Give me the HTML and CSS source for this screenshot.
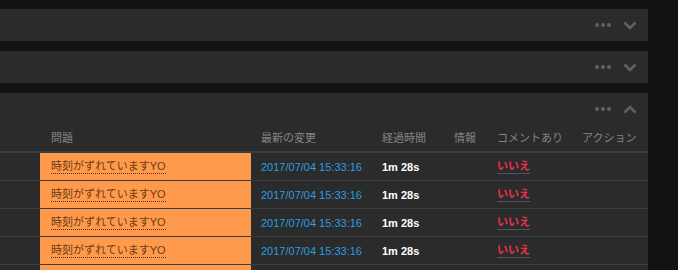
FILE: index.html
```html
<!DOCTYPE html>
<html>
  <head>
    <meta charset="utf-8">
    <title>Alerts</title>
    <link rel="stylesheet" href="styles.css">
  </head>
  <body>
    <div class="board">
      <section class="panel">
        <div class="panel-head">
          <span class="dots"><i></i><i></i><i></i></span>
          <svg class="chevron" width="14" height="9" viewBox="0 0 14 9"><path d="M1.5 1.5 L7 7 L12.5 1.5"/></svg>
        </div>
      </section>
      <section class="panel">
        <div class="panel-head">
          <span class="dots"><i></i><i></i><i></i></span>
          <svg class="chevron" width="14" height="9" viewBox="0 0 14 9"><path d="M1.5 1.5 L7 7 L12.5 1.5"/></svg>
        </div>
      </section>
      <section class="panel">
        <div class="panel-head">
          <span class="dots"><i></i><i></i><i></i></span>
          <svg class="chevron" width="14" height="9" viewBox="0 0 14 9"><path d="M1.5 7.5 L7 2 L12.5 7.5"/></svg>
        </div>
        <div class="table">
          <div class="row head">
            <span></span>
            <span class="issue-h">問題</span>
            <span>最新の変更</span>
            <span>経過時間</span>
            <span>情報</span>
            <span>コメントあり</span>
            <span>アクション</span>
          </div>
          <div class="row">
            <span></span>
            <span class="issue"><a href="#">時刻がずれていますYO</a></span>
            <span class="date">2017/07/04 15:33:16</span>
            <span class="elapsed">1m 28s</span>
            <span></span>
            <span><a href="#" class="no">いいえ</a></span>
            <span></span>
          </div>
          <div class="row">
            <span></span>
            <span class="issue"><a href="#">時刻がずれていますYO</a></span>
            <span class="date">2017/07/04 15:33:16</span>
            <span class="elapsed">1m 28s</span>
            <span></span>
            <span><a href="#" class="no">いいえ</a></span>
            <span></span>
          </div>
          <div class="row">
            <span></span>
            <span class="issue"><a href="#">時刻がずれていますYO</a></span>
            <span class="date">2017/07/04 15:33:16</span>
            <span class="elapsed">1m 28s</span>
            <span></span>
            <span><a href="#" class="no">いいえ</a></span>
            <span></span>
          </div>
          <div class="row">
            <span></span>
            <span class="issue"><a href="#">時刻がずれていますYO</a></span>
            <span class="date">2017/07/04 15:33:16</span>
            <span class="elapsed">1m 28s</span>
            <span></span>
            <span><a href="#" class="no">いいえ</a></span>
            <span></span>
          </div>
          <div class="row">
            <span></span>
            <span class="issue"></span>
            <span></span>
            <span></span>
            <span></span>
            <span></span>
            <span></span>
          </div>
        </div>
      </section>
    </div>
  </body>
</html>
```

FILE: styles.css
```css
body, html {
    margin: 0;
    padding: 0;
    height: 270px;
    overflow: hidden;
    background: #111214;
    font-family: 'Liberation Sans', 'Noto Sans CJK JP', sans-serif;
    font-size: 11px;
}

.board {
    width: 648px;
    padding-top: 9px;
    display: flex;
    flex-direction: column;
    gap: 10px;
}

.panel {
    background: #2b2b2b;
}

.panel-head {
    height: 32px;
    display: flex;
    justify-content: flex-end;
    align-items: center;
    gap: 12px;
    padding-right: 11px;
}

.dots {
    display: flex;
    gap: 2px;
}

.dots i {
    display: block;
    width: 4px;
    height: 4px;
    border-radius: 50%;
    background: #57626b;
}

.chevron path {
    fill: none;
    stroke: #57626b;
    stroke-width: 2.6;
}

.row {
    display: grid;
    grid-template-columns: 40px 211px 121px 72px 43px 85px 1fr;
    height: 27px;
    border-bottom: 1px solid #3a3f45;
}

.row > span {
    display: flex;
    align-items: center;
    padding-left: 10px;
    white-space: nowrap;
}

.row > span:first-child {
    padding-left: 0;
}

.row.head {
    height: 23px;
    padding-bottom: 3px;
    border-bottom: 2px solid #3a3f45;
    color: #858585;
}

.row.head .issue-h {
    padding-left: 11px;
}

a {
    text-decoration: none;
    color: inherit;
}

.issue {
    background: #ff9a4c;
}

.row > .issue {
    padding-left: 11px;
}

.issue a {
    color: #6a3a14;
    border-bottom: 1px dotted #5a300e;
    line-height: 14px;
}

.date {
    color: #2a9ee0;
}

.elapsed {
    color: #fff;
    font-weight: bold;
}

a.no {
    color: #e9344c;
    font-weight: bold;
    border-bottom: 1px solid #4b5660;
    line-height: 14px;
}
```
